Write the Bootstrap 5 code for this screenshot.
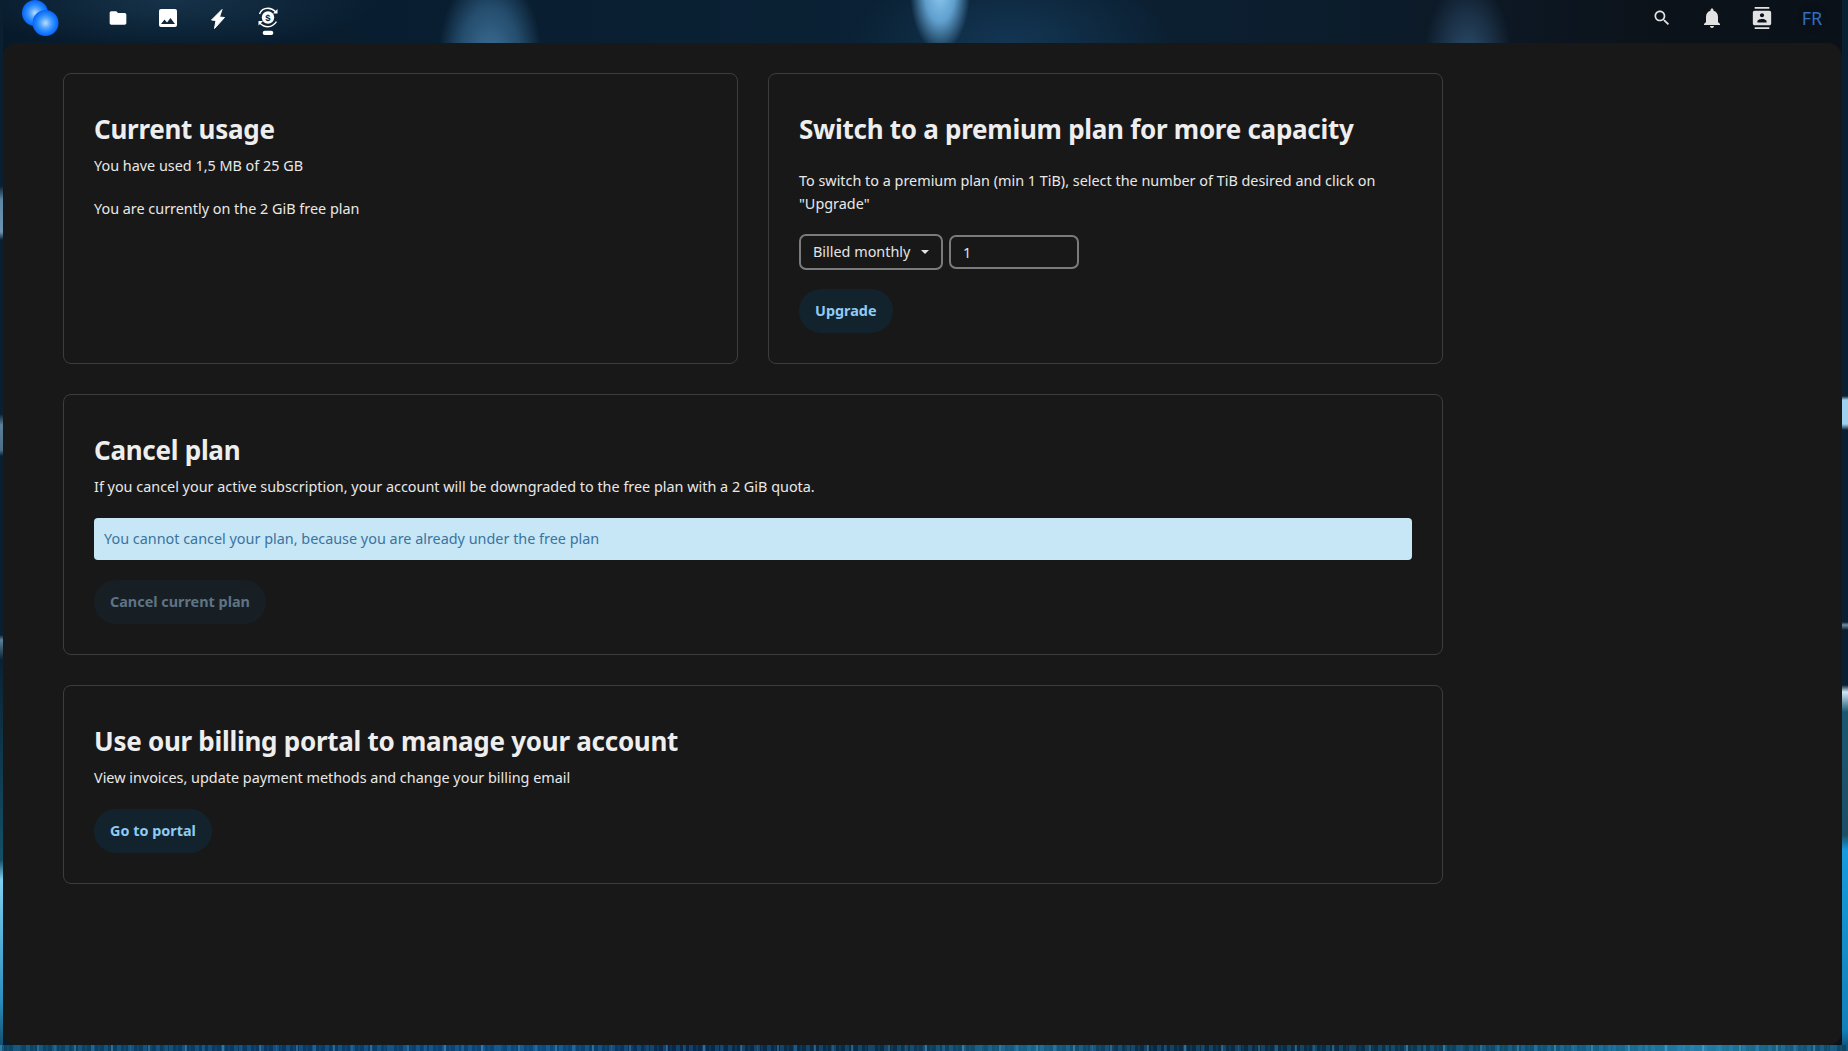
<!DOCTYPE html>
<html lang="en">
<head>
  <meta charset="UTF-8">
  <title>Billing</title>
  <link href="https://cdn.jsdelivr.net/npm/bootstrap@5.3.3/dist/css/bootstrap.min.css" rel="stylesheet">
  <style>
    html, body { height: 100%; }
    body {
      font-family: "Noto Sans", "Open Sans", sans-serif;
      font-size: 14.4px;
      color: #e8e8e8;
      overflow: hidden;
      background-color: #07182a;
      background-repeat: no-repeat;
      background-image:
        repeating-linear-gradient(90deg, rgba(120,200,240,.3) 0 2px, rgba(0,0,0,0) 2px 17px, rgba(60,150,210,.25) 17px 20px, rgba(0,0,0,0) 20px 37px),
        repeating-linear-gradient(90deg, rgba(40,120,180,.3) 0 4px, rgba(5,30,60,.1) 4px 7px, rgba(20,90,140,.25) 7px 9px, rgba(5,25,50,.1) 9px 13px),
        linear-gradient(90deg, #0e4a68 0, #0a3a66 15%, #0d4f86 30%, #082a4c 36%, #0a3048 48%, #1a6a90 56%, #0a2c44 62%, #0a3044 74%, #14668c 86%, #2788b0 92%, #0e4866 100%),
        linear-gradient(180deg, #0a1f30 0, #0a1f30 186px, #5d87a6 200px, #6d95b0 232px, #0a1f30 240px, #0a1f30 414px, #5d7f99 425px, #4c6f8a 450px, #0a1f30 456px, #0a1f30 635px, #5d7f99 640px, #0a2233 660px, #135068 860px, #7fd0f0 880px, #2b8fbf 1000px, #0e4866 1051px),
        linear-gradient(180deg, #0a1f30 0, #0a1f30 396px, #9fd0ee 400px, #9fd0ee 424px, #0a1f30 430px, #0a1f30 622px, #6f8ca0 625px, #0a1f30 630px, #0a1f30 685px, #cfe8f8 692px, #1a5670 712px, #1a4f66 835px, #169bdc 850px, #1280b8 1030px, #0e4866 1051px),
        radial-gradient(ellipse 30px 60px at 940px -8px, #8cc8f0 0, rgba(110,180,230,.85) 50%, rgba(40,90,130,0) 100%),
        radial-gradient(ellipse 52px 90px at 490px 60px, rgba(66,118,158,.95) 0, rgba(50,100,140,.65) 60%, rgba(40,90,130,0) 100%),
        radial-gradient(ellipse 44px 80px at 1468px 60px, rgba(48,84,115,.9) 0, rgba(40,70,100,.5) 60%, rgba(40,70,100,0) 100%),
        radial-gradient(ellipse 160px 80px at 1010px 43px, rgba(22,62,95,.7) 0, rgba(22,62,95,0) 100%),
        radial-gradient(ellipse 210px 50px at 170px 0, rgba(32,66,92,.6) 0, rgba(32,66,92,0) 100%),
        linear-gradient(90deg, #071a2b 0, #0b2236 55%, #0c1a28 78%, #0c1219 90%, #0b1118 100%);
      background-size: 100% 6px, 100% 6px, 100% 6px, 3px 100%, 6px 100%, auto, auto, auto, auto, auto, auto;
      background-position: 0 100%, 0 100%, 0 100%, 0 0, 100% 0, 0 0, 0 0, 0 0, 0 0, 0 0, 0 0;
    }
    .app-shell { height: 100vh; padding: 0 6px 6px 3px; display: flex; flex-direction: column; }
    .top-bar { height: 43px; flex: none; display: flex; align-items: flex-start; padding-left: 19px; padding-right: 15px; }
    .app-logo { width: 40px; height: 37px; flex: none; }
    .nav-left { margin-left: 31px; }
    .nav-item-ico { width: 50px; height: 36px; display: flex; align-items: center; justify-content: center; color: #fff; }
    .nav-right .nav-item-ico { color: #e2e2e2; }
    .coin-ico { margin-top: 6px; }
    .lang-btn { width: 30px; height: 30px; margin: 3px 0 0 10px; border-radius: 50%; background: #0a1018; color: #2f6fc4; font-size: 18px; display: flex; align-items: center; justify-content: center; }
    .main-panel { flex: 1; background: #181818; border-radius: 14px; padding: 30px 60px; }
    .settings-col { width: 1380px; display: flex; flex-direction: column; gap: 30px; }
    .plan-row { --bs-gutter-x: 30px; --bs-gutter-y: 0; }
    .pane {
      background: transparent;
      border: 1px solid #3d3d3d;
      border-radius: 8px;
      padding: 30px;
      color: #e8e8e8;
    }
    .pane-title { font-size: 26px; font-weight: 700; line-height: 34px; margin: 8px 0; color: #eee; letter-spacing: -.27px; }
    .pane p { margin: 0; line-height: 23px; }
    .pane p.usage-line { margin-top: 20px; }
    .pane p.upgrade-text { margin-top: 15px; }
    .select-line { display: flex; align-items: center; gap: 6px; margin-top: 19px; }
    .plan-select {
      width: 144px; height: 36px; border: 2px solid #7b7b7b; border-radius: 7px; background: transparent;
      color: #e4e4e4; font-size: 14.4px; padding: 0 0 0 12px; display: flex; align-items: center; white-space: nowrap;
    }
    .plan-select::after { margin-left: 11px; }
    .plan-select:hover, .plan-select:active { color: #e4e4e4 !important; border-color: #7b7b7b !important; }
    .plan-input {
      width: 130px; height: 34px; border: 2px solid #7b7b7b; border-radius: 7px; background: transparent;
      color: #e4e4e4; font-size: 14.4px; padding: 0 12px;
    }
    .plan-input:focus { background: transparent; color: #e4e4e4; border-color: #7b7b7b; box-shadow: none; }
    .btn-line { margin-top: 19px; }
    .pill-btn {
      background: #13232e; color: #8ecbf5; font-size: 14.4px; font-weight: 700;
      border: 0; border-radius: 22px; height: 44px; padding: 0 16px;
    }
    .pill-btn:hover { background: #13232e; color: #8ecbf5; }
    .pill-btn:disabled { background: #171f24; color: #5e7485; opacity: 1; }
    .note-box {
      background: #c7e7f6; color: #3a73a0; border: 0; border-radius: 4px;
      padding: 0 10px; height: 42px; display: flex; align-items: center; margin: 20px 0 0;
    }
    .note-box + .btn-line { margin-top: 20px; }
    .portal-line { margin-top: 20px; }
  </style>
</head>
<body>

<div class="app-shell">
  <div class="top-bar">
    <svg class="app-logo" viewBox="0 0 40 37">
      <defs>
        <radialGradient id="logoBlue">
          <stop offset="0" stop-color="#b9dcff"/>
          <stop offset=".18" stop-color="#8cc4ff"/>
          <stop offset=".38" stop-color="#58a6ff"/>
          <stop offset=".62" stop-color="#2a8cff"/>
          <stop offset=".85" stop-color="#1273ff"/>
          <stop offset="1" stop-color="#0b62f0"/>
        </radialGradient>
      </defs>
      <circle cx="13" cy="13" r="13" fill="url(#logoBlue)"/>
      <circle cx="23.500" cy="23" r="13" fill="url(#logoBlue)"/>
    </svg>
    <div class="d-flex nav-left">
      <div class="nav-item-ico">
        <svg width="20" height="20" viewBox="0 0 24 24" fill="currentColor"><path d="M10 4H4c-1.100 0-2 .9-2 2v12c0 1.100.9 2 2 2h16c1.100 0 2-.9 2-2V8c0-1.100-.9-2-2-2h-8l-2-2z"/></svg>
      </div>
      <div class="nav-item-ico">
        <svg width="24" height="24" viewBox="0 0 24 24" fill="currentColor"><path d="M21 19V5c0-1.100-.9-2-2-2H5c-1.100 0-2 .9-2 2v14c0 1.100.9 2 2 2h14c1.100 0 2-.9 2-2zM8.500 13.500l2.500 3 3.500-4.500 4.500 6H5l3.500-4.500z"/><circle cx="15.500" cy="8.500" r="1.800"/></svg>
      </div>
      <div class="nav-item-ico">
        <svg width="24" height="24" viewBox="0 0 24 24" fill="currentColor" stroke="currentColor" stroke-width="1" stroke-linejoin="round"><path d="M16 3.500 5.500 14l4.500.5L8.500 22.500 18.500 11.500l-5 -.5z"/></svg>
      </div>
      <div class="nav-item-ico">
        <svg class="coin-ico" width="24" height="30" viewBox="0 0 24 30" fill="none">
          <circle cx="12" cy="11.500" r="6.200" fill="#fff"/>
          <text x="12" y="15" text-anchor="middle" font-size="9.500" font-weight="700" font-family="Liberation Sans" fill="#0a1c2c">$</text>
          <path d="M3.500 8C5 4 8.500 2.300 12 2.300c3 0 5.500 1.300 8 3.700M3.500 16.700C6 19.500 9 20.700 12 20.700c3 0 6-1.500 8.500-5" stroke="#fff" stroke-width="1.400"/>
          <path d="M21.500 3v4.500h-4.500zM2.500 19.500V15H7z" fill="#fff"/>
          <rect x="6.700" y="24.700" width="10.600" height="4.300" rx="2.100" fill="#fff"/>
        </svg>
      </div>
    </div>
    <div class="d-flex ms-auto nav-right">
      <div class="nav-item-ico">
        <svg width="20" height="20" viewBox="0 0 24 24" fill="currentColor"><path d="M15.500 14h-.8l-.3-.3c1-1.100 1.600-2.600 1.600-4.200C16 5.900 13.100 3 9.500 3S3 5.900 3 9.500 5.900 16 9.500 16c1.600 0 3.100-.6 4.200-1.600l.3.300v.8l5 5 1.500-1.500-5-5zm-6 0C7 14 5 12 5 9.500S7 5 9.500 5 14 7 14 9.500 12 14 9.500 14z"/></svg>
      </div>
      <div class="nav-item-ico">
        <svg width="24" height="24" viewBox="0 0 24 24" fill="currentColor"><path d="M12 22c1.100 0 2-.9 2-2h-4c0 1.100.9 2 2 2zm6-6v-5c0-3.100-1.600-5.600-4.500-6.300V4c0-.8-.7-1.500-1.500-1.500s-1.500.7-1.500 1.500v.7C7.600 5.400 6 7.900 6 11v5l-2 2v1h16v-1l-2-2z"/></svg>
      </div>
      <div class="nav-item-ico">
        <svg width="22" height="22" viewBox="0 0 24 24" fill="currentColor"><path d="M20 0H4v2h16V0zM4 24h16v-2H4v2zM20 4H4c-1.100 0-2 .9-2 2v12c0 1.100.9 2 2 2h16c1.100 0 2-.9 2-2V6c0-1.100-.9-2-2-2zm-8 2.800c1.200 0 2.300 1 2.300 2.300S13.200 11.300 12 11.300s-2.300-1-2.300-2.200 1.100-2.300 2.300-2.300zM17 17H7v-1.500c0-1.700 3.300-2.500 5-2.500s5 .8 5 2.500V17z"/></svg>
      </div>
      <div class="lang-btn">FR</div>
    </div>
  </div>

  <div class="main-panel">
    <div class="settings-col">
      <div class="row plan-row">
        <div class="col-6">
          <div class="card pane h-100">
            <h2 class="pane-title">Current usage</h2>
            <p>You have used 1,5 MB of 25 GB</p>
            <p class="usage-line">You are currently on the 2 GiB free plan</p>
          </div>
        </div>
        <div class="col-6">
          <div class="card pane h-100">
            <h2 class="pane-title">Switch to a premium plan for more capacity</h2>
            <p class="upgrade-text">To switch to a premium plan (min 1 TiB), select the number of TiB desired and click on "Upgrade"</p>
            <div class="select-line">
              <button type="button" class="btn plan-select dropdown-toggle">Billed monthly</button>
              <input type="text" class="form-control plan-input" value="1">
            </div>
            <div class="btn-line"><button type="button" class="btn pill-btn">Upgrade</button></div>
          </div>
        </div>
      </div>

      <div class="card pane">
        <h2 class="pane-title">Cancel plan</h2>
        <p>If you cancel your active subscription, your account will be downgraded to the free plan with a 2 GiB quota.</p>
        <div class="alert note-box" role="alert">You cannot cancel your plan, because you are already under the free plan</div>
        <div class="btn-line"><button type="button" class="btn pill-btn" disabled>Cancel current plan</button></div>
      </div>

      <div class="card pane">
        <h2 class="pane-title">Use our billing portal to manage your account</h2>
        <p>View invoices, update payment methods and change your billing email</p>
        <div class="portal-line"><button type="button" class="btn pill-btn">Go to portal</button></div>
      </div>
    </div>
  </div>
</div>

<script src="https://cdn.jsdelivr.net/npm/bootstrap@5.3.3/dist/js/bootstrap.bundle.min.js"></script>
</body>
</html>
